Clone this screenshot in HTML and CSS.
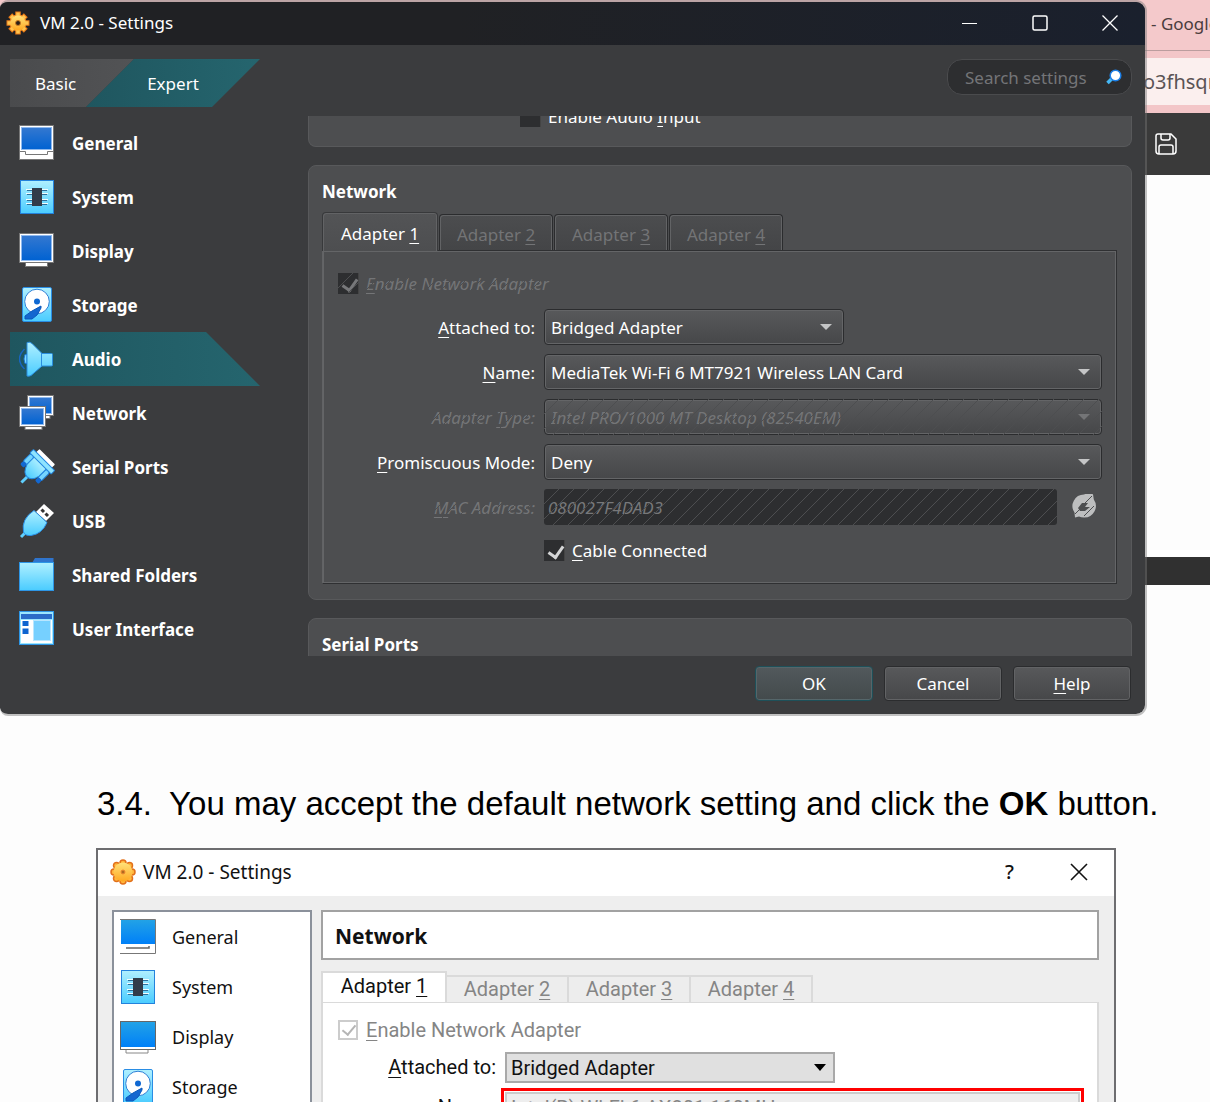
FILE: index.html
```
<!DOCTYPE html>
<html lang="en">
<head>
<meta charset="utf-8">
<title>VM 2.0 - Settings</title>
<link rel="stylesheet" href="styles.css">
</head>
<body>
<svg class="defs" aria-hidden="true">
  <defs>
    <linearGradient id="sky" x1="0" y1="0" x2="0" y2="1"><stop offset="0" stop-color="#b0f0ff"/><stop offset="1" stop-color="#4accff"/></linearGradient>
    <linearGradient id="blue" x1="0" y1="0" x2="0" y2="1"><stop offset="0" stop-color="#3478d0"/><stop offset="1" stop-color="#0062d2"/></linearGradient>
    <linearGradient id="azure" x1="0" y1="0" x2="0" y2="1"><stop offset="0" stop-color="#22a2e6"/><stop offset="1" stop-color="#0080f8"/></linearGradient>
    <linearGradient id="gold" x1="0" y1="0" x2="0" y2="1"><stop offset="0" stop-color="#ffe27a"/><stop offset="1" stop-color="#ffa820"/></linearGradient>
    <symbol id="i-system" viewBox="0 0 36 36">
      <rect x="1.500" y="1.500" width="33" height="33" fill="url(#sky)" stroke="#2382dc"/>
      <path d="M8 11.500h20M8 15.500h20M8 21.500h20M8 25.500h20" stroke="#2f6f9c"/>
      <path d="M7 10.500h22M7 14.500h22M7 20.500h22M7 24.500h22" stroke="#f2fdff"/>
      <rect x="13" y="9" width="10" height="18" fill="#323c4a"/>
    </symbol>
    <symbol id="i-storage" viewBox="0 0 36 36">
      <rect x="3.500" y="0.500" width="29" height="34" rx="1.500" fill="url(#sky)" stroke="#2a8de4"/>
      <circle cx="18" cy="14.500" r="12.300" fill="#fff" stroke="#2d7fd6"/>
      <circle cx="18" cy="14.500" r="3" fill="#0f68d2"/>
      <path d="M22 19l-9 5-7 5v3h7l5-4 4-7z" fill="#1467d0" stroke="#0b58bb"/>
    </symbol>
  </defs>
</svg>

<div class="browser">
  <div class="strip tabstrip"><span>- Google</span></div>
  <div class="strip addressbar"><span>o3fhsqr</span></div>
  <div class="strip pdfbar">
    <button class="save" aria-label="Save">
      <svg width="22" height="22" viewBox="0 0 22 22" fill="none" stroke="#fff" stroke-width="1.500"><path d="M3 1h13l5 5v12a3 3 0 0 1-3 3H4a3 3 0 0 1-3-3V3a2 2 0 0 1 2-2z"/><path d="M6 1v4a2 2 0 0 0 2 2h5a2 2 0 0 0 2-2V1M4 21v-7a2 2 0 0 1 2-2h10a2 2 0 0 1 2 2v7"/></svg>
    </button>
  </div>
  <div class="sheet previous"></div>
  <div class="sheet current">
    <p class="step"><span>3.4.</span><span>You may accept the default network setting and click the <b>OK</b> button.</span></p>

    <figure class="old">
      <div class="old-title">
        <svg width="26" height="26" viewBox="0 0 26 26"><g fill="#ffb63c" stroke="#e2701a" stroke-width="1.500"><circle cx="13" cy="4" r="3"/><circle cx="19.500" cy="6.500" r="3"/><circle cx="22" cy="13" r="3"/><circle cx="19.500" cy="19.500" r="3"/><circle cx="13" cy="22" r="3"/><circle cx="6.500" cy="19.500" r="3"/><circle cx="4" cy="13" r="3"/><circle cx="6.500" cy="6.500" r="3"/></g><circle cx="13" cy="13" r="9.500" fill="url(#gold)"/><circle cx="13" cy="13" r="2" fill="#b06a20" stroke="#f08a30"/></svg>
        <span class="old-name">VM 2.0 - Settings</span>
        <button class="old-help">?</button>
        <button aria-label="Close example"><svg width="18" height="18" viewBox="0 0 18 18" stroke="#111" stroke-width="1.600"><path d="M1 1l16 16M17 1L1 17"/></svg></button>
      </div>
      <div class="old-body">
        <ul class="old-nav">
          <li><svg width="36" height="36" viewBox="0 0 36 36"><path d="M0 .5h35.500v34H0" fill="#fff" stroke="#777"/><rect x="1" y="1" width="34" height="24" fill="url(#azure)"/><path d="M6 29h23v-2" fill="none" stroke="#666" stroke-width="1.500"/></svg>General</li>
          <li><svg width="36" height="36"><use href="#i-system"/></svg>System</li>
          <li><svg width="36" height="36" viewBox="0 0 36 36"><rect x=".5" y="2.500" width="35" height="28" fill="#fff" stroke="#666"/><rect x="1" y="3" width="34" height="25" fill="url(#azure)"/><path d="M6 31v3h22v-3" fill="#fff" stroke="#888"/></svg>Display</li>
          <li><svg width="36" height="36"><use href="#i-storage"/></svg>Storage</li>
        </ul>
        <div class="old-main">
          <h2>Network</h2>
          <div class="old-tabs">
            <button class="on">Adapter <u>1</u></button><button disabled>Adapter <u>2</u></button><button disabled>Adapter <u>3</u></button><button disabled>Adapter <u>4</u></button>
          </div>
          <div class="old-panel">
            <label class="old-check"><input type="checkbox" checked disabled><span><u>E</u>nable Network Adapter</span></label>
            <div class="old-form">
              <label for="oa"><u>A</u>ttached to:</label>
              <span class="old-combo short"><select id="oa"><option>Bridged Adapter</option></select></span>
              <label for="on"><u>N</u>ame:</label>
              <span class="marked"><span class="old-combo"><select id="on" disabled><option>Intel(R) Wi-Fi 6 AX201 160MHz</option></select></span></span>
            </div>
          </div>
        </div>
      </div>
    </figure>
  </div>
</div>

<div class="window">
  <div class="titlebar">
    <svg width="24" height="24" viewBox="0 0 24 24"><g stroke="#e87a18" stroke-width="5.500"><path d="M12 .5v23M.5 12h23M4.200 4.200l15.600 15.600M19.800 4.200L4.200 19.800"/></g><circle cx="12" cy="12" r="8.500" fill="#f09028"/><g stroke="#ffc550" stroke-width="3.500"><path d="M12 1.500v21M1.500 12h21M5 5l14 14M19 5L5 19"/></g><circle cx="12" cy="12" r="7.500" fill="url(#gold)"/><circle cx="12" cy="12" r="2.500" fill="#2a2018" stroke="#c87a20"/></svg>
    <span class="name">VM 2.0 - Settings</span>
    <button aria-label="Minimize"><svg width="16" height="16" viewBox="0 0 16 16" stroke="#fff"><path d="M0 8.500h15"/></svg></button>
    <button aria-label="Maximize"><svg width="16" height="16" viewBox="0 0 16 16" fill="none" stroke="#fff" stroke-width="1.500"><rect x="1" y="1" width="14" height="14" rx="1.500"/></svg></button>
    <button aria-label="Close"><svg width="16" height="16" viewBox="0 0 16 16" stroke="#fff" stroke-width="1.300"><path d="M.5.5l15 15M15.500.5l-15 15"/></svg></button>
  </div>
  <div class="body">
    <div class="head">
      <div class="modes"><button class="basic">Basic</button><button class="expert">Expert</button></div>
      <label class="search">
        <input type="text" placeholder="Search settings" aria-label="Search settings">
        <svg width="16" height="16" viewBox="0 0 16 16"><path d="M1.500 14L6 9.500" stroke="#45b8f5" stroke-width="3.500"/><circle cx="9.500" cy="6.500" r="5.300" fill="#fff" stroke="#1d80e8" stroke-width="1.500"/></svg>
      </label>
    </div>
    <div class="main">
      <nav>
        <a href="#general"><svg width="36" height="36" viewBox="0 0 36 36"><rect x=".5" y=".5" width="34" height="34" fill="#fff" stroke="#777"/><rect x="2.500" y="2.500" width="30" height="22" fill="url(#blue)" stroke="#8fb9ee"/><path d="M0 26.500h6.500v3h22v-3H35" fill="none" stroke="#777"/></svg>General</a>
        <a href="#system"><svg width="36" height="36"><use href="#i-system"/></svg>System</a>
        <a href="#display"><svg width="36" height="36" viewBox="0 0 36 36"><rect x="6.500" y="29" width="22" height="4.500" fill="#fff" stroke="#777"/><rect x=".5" y=".5" width="34" height="29" fill="#fff" stroke="#777"/><rect x="2.500" y="2.500" width="30" height="25" fill="url(#blue)" stroke="#8fb9ee"/></svg>Display</a>
        <a href="#storage"><svg width="36" height="36"><use href="#i-storage"/></svg>Storage</a>
        <a href="#audio" class="on"><svg width="36" height="36" viewBox="0 0 36 36"><path d="M5.500 8Q-4.500 18 5.500 28" fill="none" stroke="#1766c0" stroke-width="1.500"/><path d="M8 13.500H6q-2 4.500 0 9h2z" fill="#7fdcff" stroke="#1c78d8"/><path d="M8 1.500q3-1 5 1l10 10h9.500q1 0 1 1v10.500q0 1-1 1H23L12 34.500q-2 1-4 .5z" fill="url(#sky)" stroke="#2b8fe0"/><path d="M22.500 12v14" stroke="#2b8fe0"/></svg>Audio</a>
        <a href="#network"><svg width="36" height="36" viewBox="0 0 36 36"><g id="mon"><rect x="14" y="20" width="17" height="3.500" fill="#fff" stroke="#777"/><rect x="8.500" y=".5" width="26" height="20" fill="#fff" stroke="#777"/><rect x="10.500" y="2.500" width="22" height="16" fill="url(#blue)" stroke="#8fb9ee"/></g><use href="#mon" x="-8" y="11"/></svg>Network</a>
        <a href="#serial"><svg width="36" height="36" viewBox="0 0 36 36"><g transform="translate(18 18) rotate(45)"><rect x="-11" y="-14.500" width="22" height="5" rx="1" fill="#fff"/><rect x="-14" y="-5" width="5" height="11" rx="2" fill="#75d5ff" stroke="#2488e0"/><rect x="8" y="-5" width="5" height="12" rx="2" fill="#75d5ff" stroke="#2488e0"/><rect x="-14" y="5" width="5" height="5" rx="1.500" fill="#1268d2"/><rect x="8" y="6" width="5" height="5" rx="1.500" fill="#1268d2"/><path d="M0 12v10" stroke="#5fd0ff" stroke-width="3"/><path d="M-9-6H8V5Q6 14 0 14T-9 5z" fill="url(#sky)" stroke="#2488e0"/><rect x="-15" y="-10" width="30" height="5" rx="1" fill="#8fe4ff" stroke="#2488e0"/></g></svg>Serial Ports</a>
        <a href="#usb"><svg width="36" height="36" viewBox="0 0 36 36"><path d="M6 30l-4 4" stroke="#5fd0ff" stroke-width="3"/><path d="M25 1l10 9-8 8-10-9z" fill="#fff"/><path d="M22.500 6.500l2.500 2.500M26.500 10.500l2.500 2.500" stroke="#333" stroke-width="3"/><path d="M15 7.500L28 19.500Q23 31 12 32.500 6 33 4.500 29 2 16 15 7.500z" fill="url(#sky)" stroke="#2a90e8"/></svg>USB</a>
        <a href="#folders"><svg width="36" height="36" viewBox="0 0 36 36"><path d="M13 6l3-5h18.500v6H13z" fill="#2f74cc"/><rect x=".5" y="5.500" width="34" height="28" fill="url(#sky)" stroke="#2d96e6"/></svg>Shared Folders</a>
        <a href="#ui"><svg width="36" height="36" viewBox="0 0 36 36"><rect x=".5" y=".5" width="34" height="33" fill="#9be6ff" stroke="#2d96e6"/><rect x="2" y="3" width="31" height="5" fill="#2a6cc8"/><rect x="2" y="9" width="31" height="23" fill="#fff"/><path d="M3.500 10h6v5h-6zM3.500 17.500h6v5.500h-6z" fill="#0e64d0"/><rect x="14.500" y="9.500" width="17" height="20" fill="#76d0ff" stroke="#b9e6ff"/></svg>User Interface</a>
      </nav>
      <div class="pane">
        <section class="group cut"><label class="check"><input type="checkbox"><span>Enable Audio <u>I</u>nput</span></label></section>
        <section class="group net">
          <h2>Network</h2>
          <div class="tabs">
            <button class="on">Adapter <u>1</u></button><button disabled>Adapter <u>2</u></button><button disabled>Adapter <u>3</u></button><button disabled>Adapter <u>4</u></button>
          </div>
          <div class="panel">
            <label class="check off enable"><input type="checkbox" checked disabled><span><u>E</u>nable Network Adapter</span></label>
            <div class="form">
              <label for="att"><u>A</u>ttached to:</label>
              <span class="combo short"><select id="att"><option>Bridged Adapter</option></select></span>
              <label for="nam"><u>N</u>ame:</label>
              <span class="combo"><select id="nam"><option>MediaTek Wi-Fi 6 MT7921 Wireless LAN Card</option></select></span>
              <label for="typ" class="off">Adapter <u>T</u>ype:</label>
              <span class="combo off"><select id="typ" disabled><option>Intel PRO/1000 MT Desktop (82540EM)</option></select></span>
              <label for="pro"><u>P</u>romiscuous Mode:</label>
              <span class="combo"><select id="pro"><option>Deny</option></select></span>
              <label for="mac" class="off"><u>M</u>AC Address:</label>
              <span class="mac"><span class="macbox"><input id="mac" type="text" value="080027F4DAD3" disabled></span><button disabled aria-label="Refresh MAC address"><svg width="24" height="24" viewBox="0 0 24 24"><path d="M12 .5a11.500 11.500 0 0 1 9-.2l.8 5.200A11.500 11.500 0 0 1 12 23.500q-3 0-5-1l-4 1-.5-5A11.500 11.500 0 0 1 12 .5z" fill="#bdbebf"/><path d="M6 14l4-5h6l-3 4h5l-5 4H8z" fill="#4d4e50"/><path d="M20 2l-7 7M10 13l-7 7M22 12l-10 10" stroke="#4d4e50"/></svg></button></span>
              <label class="check cable"><input type="checkbox" checked><span><u>C</u>able Connected</span></label>
            </div>
          </div>
        </section>
        <section class="group serial"><h2>Serial Ports</h2></section>
      </div>
    </div>
    <div class="foot"><button class="ok">OK</button><button>Cancel</button><button><u>H</u>elp</button></div>
  </div>
</div>
</body>
</html>
```
FILE: styles.css
```
* { box-sizing: border-box; }
body {
  margin: 0;
  height: 100vh;
  overflow: hidden;
  position: relative;
  background: #fdfdfd;
  font-family: "Noto Sans", "Open Sans", sans-serif;
  font-size: 17px;
}
button, input, select { font: inherit; color: inherit; }
button { border: 0; padding: 0; background: none; }
h2, p, ul, figure { margin: 0; padding: 0; }
u { text-underline-offset: 3px; text-decoration-thickness: 1px; text-decoration-skip-ink: none; }
svg { flex: none; display: block; }
.defs { position: absolute; width: 0; height: 0; }

/* Browser and document behind the dialog */
.strip { display: grid; grid-template-columns: minmax(0, 1fr) 64px; align-items: center; overflow: hidden; }
.strip > * { grid-column: 2; white-space: nowrap; }
.tabstrip { height: 51px; background: #f4c9cb; border-bottom: 1px solid #bb9d9e; color: #4a3c3d; padding-bottom: 4px; }
.tabstrip span { padding-left: 5px; }
.addressbar { height: 62px; background: #fbefee; border: solid #f3c6c8; border-width: 7px 0 8px; color: #5a5355; font-size: 20px; }
.addressbar span { margin-left: -3px; }
.pdfbar { height: 62px; background: #3a3a3a; }
.save { justify-self: start; margin-left: 9px; }
.sheet.previous { height: 382px; }
.sheet.current { border-top: 28px solid #303030; padding: 196px 0 0; }
.step { display: flex; gap: 17px; padding-left: 97px; font: 33px/46px "Liberation Sans", Arial, sans-serif; color: #000; white-space: nowrap; }

/* Older light dialog shown as the figure */
.old { margin: 21px 94px 0 96px; border: 2px solid #6d6d70; border-bottom: 0; background: #eee; color: #111; font: 20px/24px Roboto, sans-serif; }
.old-title { display: flex; align-items: center; height: 46px; padding: 0 26px 2px 12px; background: #fff; }
.old-name { flex: 1; padding-left: 7px; font-family: "Noto Sans", sans-serif; font-size: 19px; }
.old-help { margin-right: 56px; font-family: "Noto Sans", sans-serif; font-weight: 500; }
.old-body { display: grid; grid-template-columns: 200px minmax(0, 1fr); gap: 9px; padding: 14px 15px 0 14px; }
.old-nav { list-style: none; background: #fff; border: 2px solid #8b919b; padding: 0 6px; height: 280px; font-family: "Noto Sans", sans-serif; font-size: 18px; }
.old-nav li { display: flex; align-items: center; gap: 16px; height: 50px; }
.old h2 { height: 50px; padding-left: 12px; background: #fff; border: 2px solid #a2a2a2; font: bold 21px/48px "Noto Sans", sans-serif; }
.old-tabs { display: flex; align-items: flex-end; height: 42px; }
.old-tabs button { width: 122px; height: 27px; padding-bottom: 4px; border: 2px solid #dadada; border-width: 2px 2px 0 0; background: #ededed; color: #858585; }
.old-tabs .on { width: 126px; height: 31px; background: #fff; border-left-width: 2px; color: #111; }
.old-panel { background: #fff; border: 2px solid #dadada; border-top-width: 1px; padding: 14px 13px 0 15px; height: 200px; }
.old-check { display: flex; align-items: center; gap: 8px; color: #858585; height: 26px; }
.old-check input { appearance: none; margin: 0; width: 20px; height: 20px; border: 2px solid #ccc; position: relative; }
.old-check input::after { content: ""; position: absolute; left: 5px; top: 0; width: 6px; height: 11px; border: solid #b5b5b5; border-width: 0 2px 2px 0; transform: rotate(40deg); }
.old-form { display: grid; grid-template-columns: 158px minmax(0, 1fr); column-gap: 5px; row-gap: 5px; padding-top: 9px; align-items: center; }
.old-form label { text-align: right; line-height: 31px; }
.old-combo { position: relative; display: block; margin-left: 4px; }
.old-combo.short { width: 330px; }
.old-combo select { appearance: none; width: 100%; height: 31px; margin: 0; padding: 0 4px; border: 2px solid #a9a9a9; border-radius: 0; background: #e0e0e0; color: #111; display: block; }
.old-combo select:disabled { background: #eee; border-color: #ccc; color: #858585; opacity: 1; }
.old-combo.short::after { content: ""; position: absolute; right: 9px; top: 12px; border: 6px solid transparent; border-top: 7px solid #000; border-bottom: 0; }
.marked { border: 3px solid #f00; padding: 1px; }
.marked .old-combo { margin-left: 0; }

/* Settings dialog */
.window {
  position: absolute;
  top: 0;
  left: 0;
  right: 63px;
  border: 2px solid rgba(120, 120, 120, .45);
  border-left: 0;
  border-radius: 8px 11px 11px 8px;
  background: #3b3c3e padding-box;
  color: #fff;
  overflow: hidden;
}
.titlebar { display: flex; align-items: center; height: 43px; padding: 0 0 2px 6px; background: linear-gradient(90deg, #202124 40%, #1a202d); }
.titlebar .name { flex: 1; padding-left: 10px; }
.titlebar button { width: 70px; display: grid; place-items: center; }
.body { padding: 14px 13px 13px 10px; }
.head { display: flex; justify-content: space-between; align-items: flex-start; height: 57px; }
.modes { display: flex; }
.modes button { height: 48px; }
.basic { width: 124px; padding-left: 25px; text-align: left; background: linear-gradient(90deg, #4a4b4d, #525355); clip-path: polygon(0 0, 100% 0, 76px 100%, 0 100%); }
.expert { width: 174px; margin-left: -48px; background: linear-gradient(90deg, #1f565f, #25656e); clip-path: polygon(48px 0, 100% 0, 126px 100%, 0 100%); }
.search { display: flex; align-items: center; width: 185px; height: 36px; padding: 0 9px 0 17px; border: 1px solid #4a4b4d; border-radius: 15px; background: #2d2e30; }
.search input { flex: 1; min-width: 0; padding: 0; border: 0; background: none; outline: 0; }
.search input::placeholder { color: #747578; opacity: 1; }
.main { display: grid; grid-template-columns: 250px minmax(0, 1fr); gap: 48px; }
nav a { display: flex; align-items: center; gap: 17px; height: 54px; padding-left: 9px; color: #fff; font-weight: bold; text-decoration: none; }
nav .on { background: linear-gradient(90deg, #1f565f, #25656e); clip-path: polygon(0 0, 196px 0, 100% 100%, 0 100%); }
.pane { height: 0; min-height: 100%; overflow: hidden; display: flex; flex-direction: column; gap: 18px; }
.group { flex: none; background: #4d4e50; border: 1px solid #58595b; border-radius: 8px; padding: 13px; }
.group h2 { font-size: 17px; line-height: 26px; }
.group.cut { height: 31px; overflow: hidden; display: flex; align-items: flex-end; padding: 0 0 18px 211px; border-top: 0; border-radius: 0 0 8px 8px; }
.net { padding-right: 14px; padding-bottom: 15px; }
.net .tabs { display: flex; align-items: flex-end; gap: 1px; padding-top: 7px; }
.tabs button { width: 114px; height: 36px; padding-top: 3px; border: 1px solid #2b2c2e; border-bottom: 0; border-radius: 4px 4px 0 0; box-shadow: inset 1px 1px #626365, inset -1px 0 #626365; background: linear-gradient(#4c4d4f, #444547); color: #737476; }
.tabs .on { width: 116px; height: 39px; margin-bottom: -1px; padding-top: 2px; border-color: #38393b; background: linear-gradient(#535456, #4d4e50); color: #fff; position: relative; }
.panel { border: 1px solid #2f3032; border-left-color: #626365; box-shadow: inset -1px -1px #646567, inset 1px 1px #646567; padding: 22px 14px 16px 15px; }
.check { display: flex; align-items: center; gap: 7px; }
.check input { appearance: none; flex: none; margin: 0; width: 21px; height: 21px; background: #2d2e30; border-right: 1px solid #444; position: relative; }
.check input:checked::after { content: ""; position: absolute; left: 7px; top: 3px; width: 7px; height: 12px; border: solid #d4d5d6; border-width: 0 3px 3px 0; transform: rotate(35deg); }
.enable { height: 20px; margin-bottom: 16px; width: max-content; }
.form { display: grid; grid-template-columns: 197px minmax(0, 1fr); gap: 9px; align-items: center; grid-auto-rows: minmax(33px, auto); }
.form > label { justify-self: end; }
.form .cable { grid-column: 2; justify-self: start; }
.combo { position: relative; display: block; }
.combo.short { width: 300px; }
.combo select { appearance: none; display: block; width: 100%; height: 36px; margin: 0; padding: 0 6px; border: 1px solid #2b2c2e; border-radius: 4px; background: linear-gradient(#58595b, #464749); box-shadow: inset 0 0 0 1px #646567; color: #fff; opacity: 1; }
.combo::before { content: ""; position: absolute; right: 12px; top: 15px; border: 6px solid transparent; border-top-color: #c4c5c6; border-bottom: 0; }
.mac { display: flex; align-items: center; gap: 15px; }
.macbox { flex: 1; position: relative; }
.macbox input { display: block; width: 100%; height: 36px; padding: 0 4px; border: 0; border-radius: 3px; background: #2d2e30; color: #77787a; font-style: italic; }
.mac button { width: 30px; padding-bottom: 3px; }

/* Disabled controls are struck through with diagonal hatching */
.off, .off select { position: relative; color: #747577; font-style: italic; }
.off.combo::before { border-top-color: #747577; z-index: 1; }
.off::after, .macbox::after {
  content: "";
  position: absolute;
  inset: 0;
  pointer-events: none;
  background: linear-gradient(135deg, transparent 47%, #4d4e50 47%, #4d4e50 53%, transparent 53%) 0 0 / 15px 15px;
}
.off.check input:checked::after { border-color: #77787a; }

.foot { display: flex; justify-content: flex-end; gap: 11px; padding: 10px 1px 0 0; }
.foot button { width: 118px; height: 35px; border: 1px solid #2b2c2e; border-radius: 4px; background: linear-gradient(#58595b, #464749); box-shadow: inset 0 0 0 1px #626365; }
.foot .ok { border-color: #1e5059; background: linear-gradient(#52595c, #434a4c); box-shadow: inset 0 0 0 1px #55666a; }
```
